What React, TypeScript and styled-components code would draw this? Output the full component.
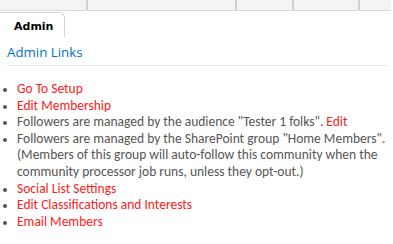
import styled, { createGlobalStyle } from 'styled-components'

const GlobalStyle = createGlobalStyle`
  html, body {
    margin: 0;
    padding: 0;
    background: #fff;
  }
`

const sections = [88, 149, 57, 66, 31]

type Item = { lines: string[]; link?: string; red?: boolean }

const items: Item[] = [
  { lines: ['Go To Setup'], red: true },
  { lines: ['Edit Membership'], red: true },
  { lines: ['Followers are managed by the audience "Tester 1 folks". '], link: 'Edit' },
  {
    lines: [
      'Followers are managed by the SharePoint group "Home Members".',
      '(Members of this group will auto-follow this community when the',
      'community processor job runs, unless they opt-out.)',
    ],
  },
  { lines: ['Social List Settings'], red: true },
  { lines: ['Edit Classifications and Interests'], red: true },
  { lines: ['Email Members'], red: true },
]

export default function App() {
  return (
    <Page>
      <GlobalStyle />
      <TopBar>
        {sections.map((w, i) => (
          <BarCell key={i} style={{ width: w }} />
        ))}
      </TopBar>
      <TabRow>
        <Tab>Admin</Tab>
      </TabRow>
      <Panel>
        <Heading>Admin Links</Heading>
        <List>
          {items.map((it, i) => (
            <Entry key={i} $red={it.red}>
              {it.lines.map((l, j) => (
                <span key={j}>
                  {j > 0 && <br />}
                  {l}
                </span>
              ))}
              {it.link && <RedLink>{it.link}</RedLink>}
            </Entry>
          ))}
        </List>
      </Panel>
    </Page>
  )
}

const Page = styled.div`
  width: 393px;
  height: 244px;
  overflow: hidden;
  background: #fff;
`

const TopBar = styled.div`
  display: flex;
  width: 391px;
  height: 10px;
  background: #f4f4f4;
  border-bottom: 1px solid #d9d9d9;
`

const BarCell = styled.div`
  height: 100%;
  box-sizing: border-box;
  border-right: 2px solid #d0d0d0;
  flex: none;
  &:last-child {
    border-right: none;
  }
`

const TabRow = styled.div`
  display: flex;
  padding-top: 1px;
`

const Tab = styled.div`
  width: 66px;
  height: 25px;
  box-sizing: border-box;
  margin-left: -1px;
  padding: 7px 0 0 14px;
  border: 1px solid #d4d4d4;
  border-bottom: none;
  border-top-right-radius: 6px;
  font-family: 'DejaVu Sans', Verdana, sans-serif;
  font-weight: bold;
  font-size: 11px;
  line-height: 13px;
  color: #000;
`

const Panel = styled.div`
  padding: 0 5px 0 7px;
`

const Heading = styled.div`
  font-family: 'Segoe UI', 'Open Sans', sans-serif;
  font-size: 13.3px;
  line-height: 18px;
  color: #0072c6;
  padding: 6px 0 4px;
  border-bottom: 1px solid #e8e8e8;
`

const List = styled.ul`
  margin: 15px 0 0;
  padding: 0 0 0 10px;
  font-family: Carlito, Calibri, Lato, sans-serif;
  font-size: 13.5px;
  line-height: 16.6px;
  color: #555;
`

const Entry = styled.li<{ $red?: boolean }>`
  white-space: nowrap;
  color: ${(p) => (p.$red ? '#ff2020' : '#555')};
  &::marker {
    color: #555;
    font-size: 12px;
  }
`

const RedLink = styled.span`
  color: #ff2020;
`
